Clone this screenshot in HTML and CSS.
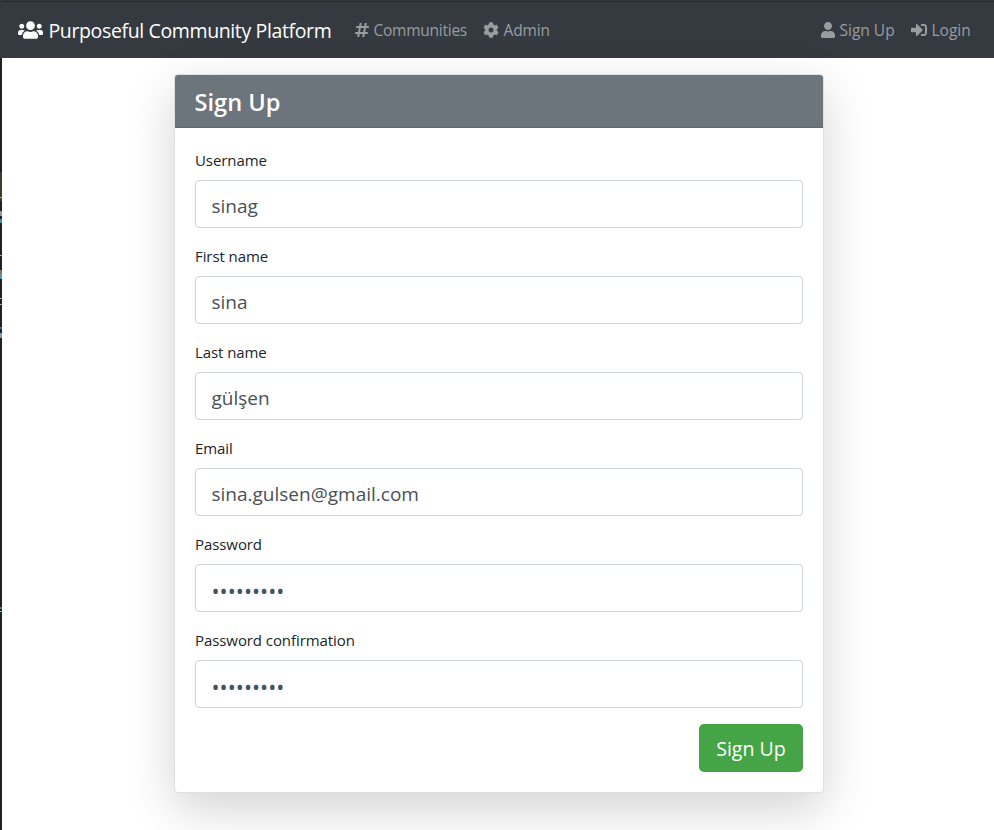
FILE: index.html
```html
<!DOCTYPE html>
<html lang="en">
<head>
<meta charset="utf-8">
<title>Purposeful Community Platform</title>
<link rel="stylesheet" href="styles.css">
</head>
<body>
<div class="edge"></div>
<div class="page">
<nav class="navbar">
  <a class="brand"><svg class="icon-users" viewBox="0 0 640 512"><path d="M96 224c35.3 0 64-28.7 64-64s-28.7-64-64-64-64 28.7-64 64 28.7 64 64 64zm448 0c35.3 0 64-28.7 64-64s-28.7-64-64-64-64 28.7-64 64 28.7 64 64 64zm32 32h-64c-17.6 0-33.5 7.1-45.1 18.6 40.3 22.1 68.9 62 75.1 109.4h66c17.7 0 32-14.3 32-32v-32c0-35.3-28.7-64-64-64zm-256 0c61.9 0 112-50.1 112-112S381.9 32 320 32 208 82.1 208 144s50.1 112 112 112zm76.8 32h-8.3c-20.8 10-43.9 16-68.5 16s-47.6-6-68.5-16h-8.3C179.6 288 128 339.6 128 403.2V432c0 26.5 21.5 48 48 48h288c26.5 0 48-21.5 48-48v-28.8c0-63.6-51.6-115.2-115.2-115.2zm-223.7-13.4C161.5 263.1 145.6 256 128 256H64c-35.3 0-64 28.7-64 64v32c0 17.7 14.3 32 32 32h65.9c6.3-47.4 34.9-87.3 75.2-109.4z"/></svg><span class="brand-name">Purposeful Community Platform</span></a>
  <a class="link communities"><svg class="icon-hash" viewBox="0 0 448 512"><path d="M440.667 182.109l7.143-40c1.313-7.355-4.342-14.109-11.813-14.109h-74.81l14.623-81.891C377.123 38.754 371.468 32 363.997 32h-40.632a12 12 0 0 0-11.813 9.891L296.175 128H197.54l14.623-81.891C213.477 38.754 207.822 32 200.35 32h-40.632a12 12 0 0 0-11.813 9.891L132.528 128H53.432a12 12 0 0 0-11.813 9.891l-7.143 40C33.163 185.246 38.818 192 46.289 192h74.81L98.242 320H19.146a12 12 0 0 0-11.813 9.891l-7.143 40C-1.123 377.246 4.532 384 12.003 384h74.81L72.19 465.891C70.877 473.246 76.532 480 84.003 480h40.632a12 12 0 0 0 11.813-9.891L151.826 384h98.634l-14.623 81.891C234.523 473.246 240.178 480 247.65 480h40.632a12 12 0 0 0 11.813-9.891L315.472 384h79.096a12 12 0 0 0 11.813-9.891l7.143-40c1.313-7.355-4.342-14.109-11.813-14.109h-74.81l22.857-128h79.096a12 12 0 0 0 11.813-9.891zM261.889 320h-98.634l22.857-128h98.634l-22.857 128z"/></svg><span>Communities</span></a>
  <a class="link admin"><svg class="icon-wide" viewBox="0 0 512 512"><path d="M487.4 315.7l-42.6-24.6c4.3-23.2 4.3-47 0-70.2l42.6-24.6c4.9-2.8 7.1-8.6 5.5-14-11.1-35.6-30-67.8-54.7-94.6-3.8-4.1-10-5.1-14.8-2.3L380.8 110c-17.9-15.4-38.5-27.3-60.8-35.1V25.8c0-5.6-3.9-10.5-9.4-11.7-36.7-8.2-74.3-7.8-109.2 0-5.5 1.2-9.4 6.1-9.4 11.7V75c-22.2 7.9-42.8 19.8-60.8 35.1L88.7 85.5c-4.9-2.8-11-1.9-14.8 2.3-24.7 26.7-43.6 58.9-54.7 94.6-1.7 5.4.6 11.2 5.5 14L67.3 221c-4.3 23.2-4.3 47 0 70.2l-42.6 24.6c-4.9 2.8-7.1 8.6-5.5 14 11.1 35.6 30 67.8 54.7 94.6 3.8 4.1 10 5.1 14.8 2.3l42.6-24.6c17.9 15.4 38.5 27.3 60.8 35.1v49.2c0 5.6 3.9 10.5 9.4 11.7 36.7 8.2 74.3 7.8 109.2 0 5.5-1.2 9.4-6.1 9.4-11.7v-49.2c22.2-7.9 42.8-19.8 60.8-35.1l42.6 24.6c4.9 2.8 11 1.9 14.8-2.3 24.7-26.7 43.6-58.9 54.7-94.6 1.5-5.5-.7-11.3-5.6-14.1zM256 336c-44.1 0-80-35.9-80-80s35.9-80 80-80 80 35.9 80 80-35.9 80-80 80z"/></svg><span>Admin</span></a>
  <a class="link signup"><svg class="icon-hash" viewBox="0 0 448 512"><path d="M224 256c70.7 0 128-57.3 128-128S294.7 0 224 0 96 57.3 96 128s57.3 128 128 128zm89.6 32h-16.7c-22.2 10.2-46.9 16-72.9 16s-50.6-5.8-72.9-16h-16.7C60.2 288 0 348.2 0 422.4V464c0 26.5 21.5 48 48 48h352c26.5 0 48-21.5 48-48v-41.6c0-74.2-60.2-134.4-134.4-134.4z"/></svg><span>Sign Up</span></a>
  <a class="link login"><svg class="icon-wide" viewBox="0 0 512 512"><path d="M416 448h-84c-6.6 0-12-5.4-12-12v-40c0-6.6 5.4-12 12-12h84c17.7 0 32-14.3 32-32V160c0-17.7-14.3-32-32-32h-84c-6.6 0-12-5.4-12-12V76c0-6.6 5.4-12 12-12h84c53 0 96 43 96 96v192c0 53-43 96-96 96zm-47-209L201 71c-15-15-41-4.5-41 17v96H24c-13.3 0-24 10.7-24 24v96c0 13.3 10.7 24 24 24h136v96c0 21.5 26 32 41 17l168-168c9.3-9.4 9.3-24.6 0-34z"/></svg><span>Login</span></a>
</nav>
<main class="card">
  <h1 class="card-header">Sign Up</h1>
  <form class="card-body">
    <div class="field"><label for="u">Username</label><input id="u" type="text" value="sinag"></div>
    <div class="field"><label for="f">First name</label><input id="f" type="text" value="sina"></div>
    <div class="field"><label for="l">Last name</label><input id="l" type="text" value="gülşen"></div>
    <div class="field"><label for="e">Email</label><input id="e" type="text" value="sina.gulsen@gmail.com"></div>
    <div class="field"><label for="p">Password</label><input id="p" class="secret" type="text" value="•••••••••"></div>
    <div class="field"><label for="c">Password confirmation</label><input id="c" class="secret" type="text" value="•••••••••"></div>
    <button class="submit" type="button">Sign Up</button>
  </form>
</main>
</div>
</body>
</html>
```
FILE: styles.css
```css
* { box-sizing: border-box; }
body {
  margin: 0;
  height: 830px;
  display: flex;
  overflow: hidden;
  background: #fff;
  font-family: "Open Sans", "Noto Sans", sans-serif;
  font-size: 15px;
  color: #212529;
}
.edge {
  width: 2px;
  background: linear-gradient(#34373b 0 58px, #202124 58px 172px, #3d3c2c 172px 197px, #aaa 197px 198px, #3d3c2c 198px 201px, #202124 201px 211px, #8e98a2 211px 216px, #202124 216px 219px, #4b89b5 219px 223px, #202124 223px 255px, #aaa 255px 256px, #202124 256px 270px, #957052 270px 274px, #5892bd 274px 279px, #202124 279px 298px, #aaa 298px 299px, #202124 299px 304px, #aaa 304px 305px, #202124 305px 327px, #3b719c 327px 329px, #202124 329px 333px, #7e9ab1 333px 338px, #202124 338px 607px, #517689 607px 609px, #202124 609px 611px, #aaa 611px 612px, #202124 612px);
}
.page { flex: 1; }
.navbar {
  height: 58px;
  background: linear-gradient(#36383b 0 1px, #27282b 1px 2px, #343a40 2px);
  display: flex;
  align-items: center;
  padding: 2px 23px 0 16px;
}
.navbar svg { fill: currentColor; flex: none; }
.brand, .link { display: flex; align-items: center; white-space: nowrap; }
.brand { color: #fff; font-size: 19.5px; letter-spacing: -.37px; width: 337px; }
.icon-users { width: 25px; height: 20px; margin-right: 5.5px; }
.icon-hash { width: 14px; height: 16px; margin-right: 4.5px; }
.icon-wide { width: 16px; height: 16px; margin-right: 4.5px; }
.link { color: #9a9da0; font-size: 15.5px; }
.communities { width: 128px; letter-spacing: -.25px; }
.admin { letter-spacing: -.15px; }
.signup { margin-left: auto; width: 90px; }
.login { width: 60px; }
.card {
  width: 650px;
  height: 719px;
  margin: 16px 0 0 172px;
  border: 1px solid #dfdfdf;
  border-radius: 4px;
  background: #fff;
  box-shadow: 0 16px 48px rgba(0, 0, 0, .175);
}
.card-header {
  margin: 0;
  height: 53px;
  padding: 0 19.5px;
  line-height: 54px;
  font-size: 23.6px;
  font-weight: 600;
  color: #fff;
  background: #6d757c;
  border-bottom: 1px solid #5f666d;
  border-radius: 3px 3px 0 0;
}
.card-body { padding: 20px; display: flex; flex-direction: column; }
.field { height: 80px; margin-bottom: 16px; display: flex; flex-direction: column; }
label { line-height: 24px; height: 24px; margin-bottom: 8px; letter-spacing: -.08px; }
input {
  height: 48px;
  width: 608px;
  padding: 5px 15.5px 1px;
  border: 1px solid #ced4da;
  border-radius: 4px;
  font: 19px "Open Sans", sans-serif;
  color: #495057;
  outline: none;
}
.secret { font-size: 21.5px; letter-spacing: .02px; }
.submit {
  align-self: flex-end;
  width: 104px;
  height: 48px;
  padding: 1px 0 0;
  border: 0;
  border-radius: 5px;
  background: #45a446;
  color: #fff;
  font: 19.6px "Open Sans", sans-serif;
}
```
